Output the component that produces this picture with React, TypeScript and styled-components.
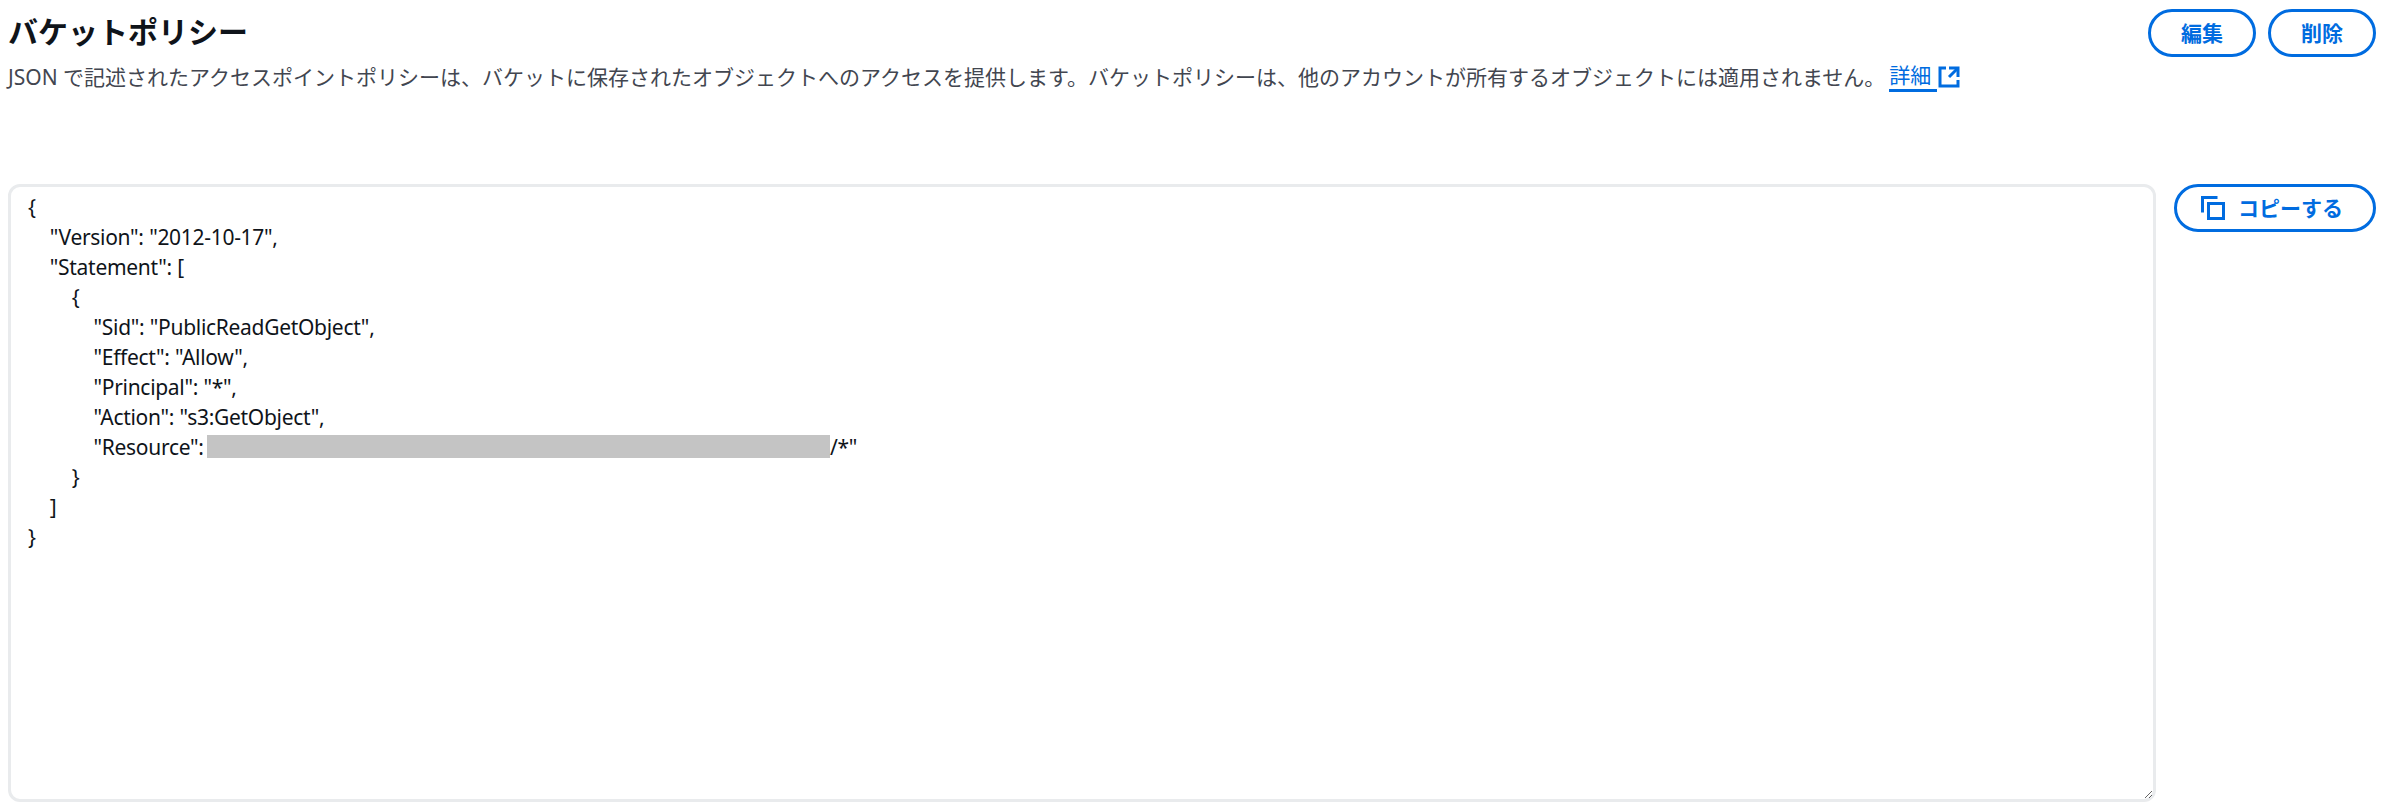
import * as React from 'react'
import styled, { createGlobalStyle } from 'styled-components'

const policyLines = [
  '{',
  '    "Version": "2012-10-17",',
  '    "Statement": [',
  '        {',
  '            "Sid": "PublicReadGetObject",',
  '            "Effect": "Allow",',
  '            "Principal": "*",',
  '            "Action": "s3:GetObject",',
]
const policyTail = ['        }', '    ]', '}']

export default function App() {
  return (
    <Page>
      <GlobalStyle />
      <Header>
        <div className="heading">
          <h2>バケットポリシー</h2>
          <p>
            JSON で記述されたアクセスポイントポリシーは、バケットに保存されたオブジェクトへのアクセスを提供します。バケットポリシーは、他のアカウントが所有するオブジェクトには適用されません。
            <InfoLink href="#">
              <span>詳細</span>
              <svg viewBox="0 0 16 16" width="24" height="24" fill="none" stroke="currentColor" strokeWidth="2">
                <path d="M14 8V2H8" />
                <path d="M14 2 8 8" />
                <path d="M6 2H2v12h12v-4" />
              </svg>
            </InfoLink>
          </p>
        </div>
        <div className="actions">
          <PillButton>編集</PillButton>
          <PillButton>削除</PillButton>
        </div>
      </Header>
      <PolicyRow>
        <Editor>
          {policyLines.map((line) => (
            <div key={line}>{line}</div>
          ))}
          <div>
            {'            "Resource": '}
            <Redacted />
            {'/*"'}
          </div>
          {policyTail.map((line) => (
            <div key={line}>{line}</div>
          ))}
        </Editor>
        <PillButton wide>
          <svg viewBox="0 0 16 16" width="24" height="24" fill="none" stroke="currentColor" strokeWidth="2">
            <path d="M1 11V1h10" />
            <path d="M5 5h10v10H5z" />
          </svg>
          コピーする
        </PillButton>
      </PolicyRow>
    </Page>
  )
}

const GlobalStyle = createGlobalStyle`
  html, body {
    margin: 0;
    background: #fff;
  }
  body {
    font-family: 'Noto Sans', 'Noto Sans CJK JP', sans-serif;
    font-size: 21px;
    line-height: 30px;
    color: #0f141a;
  }
`

const Page = styled.div`
  box-sizing: border-box;
  width: 2383px;
  height: 805px;
  padding: 9px 7px 3px 8px;
  display: flex;
  flex-direction: column;
  overflow: hidden;
`

const Header = styled.header`
  display: flex;
  justify-content: space-between;
  align-items: flex-start;
  height: 175px;

  h2 {
    margin: 0;
    font-size: 30px;
    line-height: 45px;
    font-weight: 700;
    color: #0f141a;
  }

  p {
    margin: 8px 0 0;
    color: #424650;
    white-space: nowrap;
  }

  .actions {
    display: flex;
    gap: 12px;
  }
`

const InfoLink = styled.a`
  display: inline-flex;
  align-items: center;
  margin-left: 4px;
  color: #006ce0;
  text-decoration: none;
  vertical-align: top;

  span {
    border-bottom: 3px solid #006ce0;
    padding-right: 6px;
    line-height: 27px;
  }
`

const PillButton = styled.button<{ wide?: boolean }>`
  box-sizing: border-box;
  flex: none;
  display: inline-flex;
  align-items: center;
  justify-content: center;
  gap: 13px;
  width: ${(p) => (p.wide ? '202px' : '108px')};
  height: 48px;
  padding: 0 ${(p) => (p.wide ? '6px' : '0')} 0 0;
  background: #fff;
  border: 3px solid #006ce0;
  border-radius: 24px;
  color: #006ce0;
  font: 700 21px/30px 'Noto Sans', 'Noto Sans CJK JP', sans-serif;
`

const PolicyRow = styled.div`
  flex: 1;
  display: flex;
  align-items: flex-start;
  gap: 18px;
  min-height: 0;
`

const Editor = styled.div`
  box-sizing: border-box;
  flex: 1;
  height: 618px;
  padding: 5px 17px;
  border: 3px solid #e9ebed;
  border-radius: 12px;
  color: #0f141a;
  letter-spacing: -0.3px;
  word-spacing: 0.3px;
  white-space: pre;
  overflow: auto;
  resize: both;
`

const Redacted = styled.span`
  display: inline-block;
  width: 623px;
  height: 23px;
  margin-left: -2px;
  vertical-align: -3px;
  background: #c4c4c4;
`
